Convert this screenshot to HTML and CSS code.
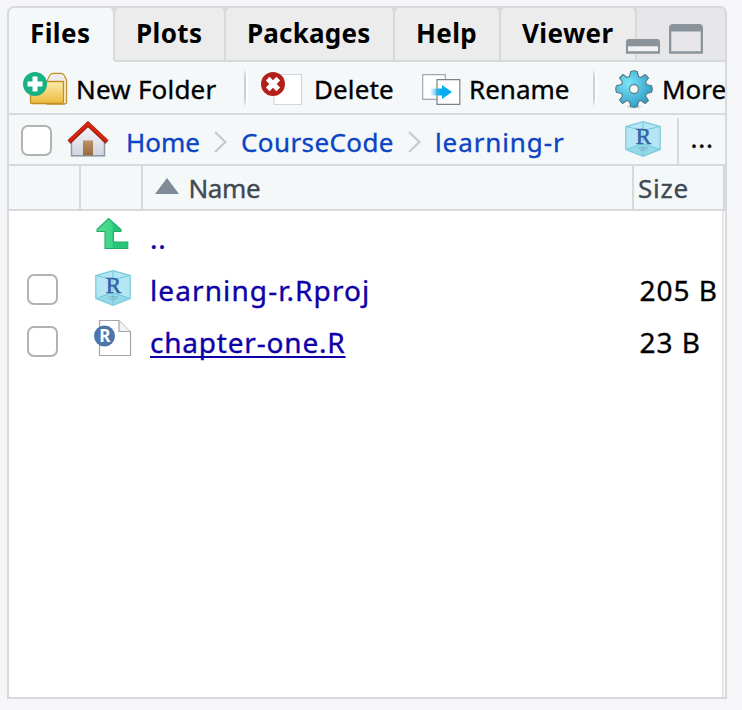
FILE: index.html
```html
<!DOCTYPE html>
<html lang="en">
<head>
<meta charset="utf-8">
<title>Files</title>
<link rel="stylesheet" href="styles.css">
</head>
<body>
<svg class="defs" width="0" height="0">
  <defs>
    <linearGradient id="gold" x1="0" y1="0" x2="0" y2="1"><stop offset="0" stop-color="#f9edaa"/><stop offset="1" stop-color="#edb93d"/></linearGradient>
    <radialGradient id="blue" cx=".35" cy=".35" r=".7"><stop offset="0" stop-color="#7be6f6"/><stop offset="1" stop-color="#2f9cc6"/></radialGradient>
    <linearGradient id="wall" x1="0" y1="0" x2="0" y2="1"><stop offset="0" stop-color="#f5f5f8"/><stop offset="1" stop-color="#d2d5df"/></linearGradient>
    <linearGradient id="door" x1="0" y1="0" x2="0" y2="1"><stop offset="0" stop-color="#bd9266"/><stop offset="1" stop-color="#956a40"/></linearGradient>
    <linearGradient id="fade"><stop offset="0" stop-color="#06aeef" stop-opacity="0"/><stop offset=".45" stop-color="#06aeef"/></linearGradient>
    <linearGradient id="leaf"><stop offset="0" stop-color="#50dc93"/><stop offset=".45" stop-color="#42d68b"/><stop offset=".55" stop-color="#27c477"/><stop offset="1" stop-color="#27c477"/></linearGradient>
    <symbol id="cube" viewBox="0 0 36 36">
      <path d="M18 .7 35.2 5.5V28.500L18 35.300.8 28.500V5.500Z" fill="#b4e6f5"/>
      <path d="M1 28.500 18 22.500 35 28.500 18 35Z" fill="#93d9ea"/>
      <path d="M1 5.500 18 9.500 35 5.500M1 28.500 18 22.500 35 28.500M18 1V35" fill="none" stroke="#6cc8d8" stroke-width="1"/>
      <path d="M18 .7 35.2 5.5V28.500L18 35.300.8 28.500V5.500Z" fill="none" stroke="#7fcbdc" stroke-width="1.300"/>
      <path d="M13 27.500q5-2 10-.5M15 29.500q4-1.500 7-.5" fill="none" stroke="#71aabc" stroke-width=".8"/>
      <text class="cube-letter" x="18.300" y="22.800" text-anchor="middle">R</text>
    </symbol>
  </defs>
</svg>
<main class="panel">
  <nav class="tabs">
    <div class="tab active">Files</div>
    <div class="tab plots">Plots</div>
    <div class="tab packages">Packages</div>
    <div class="tab">Help</div>
    <div class="tab viewer">Viewer</div>
    <div class="window-controls">
      <svg width="78" height="30" viewBox="0 0 78 30">
        <path d="M0 29.700V18q0-3 3-3H31q3 0 3 3V29.700Z" fill="#8a949a"/><path d="M2 22.300H32V27.300H2Z" fill="#f1f2f3"/>
        <path d="M43 29.700V4q0-4 4-4H73q4 0 4 4V29.700Z" fill="#8a949a"/><path d="M45.300 7.500H74.700V27.300H45.300Z" fill="#e7e7e9"/>
      </svg>
    </div>
  </nav>

  <div class="toolbar">
    <div class="tool new-folder">
      <svg width="46" height="36" viewBox="0 0 46 36">
        <path d="M23 12 27 4Q28 2.500 30 2.500H38Q40 2.500 41 4L43.500 9V31Q43.500 33 41 33H24Z" fill="#fbf3d4" stroke="#bd9234" stroke-width="1.300"/>
        <path d="M24 11 28 4.500Q28.500 3.500 30 3.500H38Q39.500 3.500 42 10V11Z" fill="#ececf0"/>
        <path d="M7.500 17 23 10.500H40.500V31Q40.500 32.500 38.500 32.500H9Q7.500 32.500 7.500 31Z" fill="url(#gold)" stroke="#c18d24" stroke-width="1.300"/>
        <circle cx="12" cy="13" r="12" fill="#17b183"/>
        <path d="M12 5.500V20.500M4.500 13H19.500" stroke="#fff" stroke-width="5"/>
      </svg><span>New Folder</span>
    </div>
    <i class="divider"></i>
    <div class="tool delete">
      <svg width="42" height="36" viewBox="0 0 42 36">
        <path d="M13 3.500H40.500V33.500H13Z" fill="#fff" stroke="#d2d6e0" stroke-width="1.200"/>
        <circle cx="12" cy="13" r="12" fill="#b51f1a"/>
        <path d="M6.700 7.700 17.300 18.300M17.300 7.700 6.700 18.300" stroke="#fff" stroke-width="5.200"/>
      </svg><span>Delete</span>
    </div>
    <div class="tool rename">
      <svg width="39" height="36" viewBox="0 0 39 36">
        <path d="M.700 3.700H23.300V28.300H.700Z" fill="#fff" stroke="#a0a7b2" stroke-width="1.200"/>
        <path d="M15 8.700H37.800V33.400H15Z" fill="#fff" stroke="#77818d" stroke-width="1.200"/>
        <path d="M8 17.500H20V14L30 21 20 28V24.500H8Z" fill="url(#fade)"/>
      </svg><span>Rename</span>
    </div>
    <i class="divider"></i>
    <div class="tool more">
      <svg width="38" height="40" viewBox="-19 -20 38 40">
        <ellipse cx="0" cy="17.500" rx="7" ry="1.800" fill="#cbd7dd"/>
        <path d="M-3.200-17.500Q0-19 3.200-17.500L4.500-12.500 7-11.500 11-14.500 14.500-11 11.500-7 12.500-4.500 17.500-3.200Q19 0 17.500 3.200L12.500 4.500 11.500 7 14.500 11.500 11 14.500 7 11.500 4.500 12.500 3.200 17.500Q0 19-3.200 17.500L-4.500 12.500-7 11.500-11.500 14.500-14.500 11-11.500 7-12.500 4.500-17.500 3.200Q-19 0-17.500-3.200L-12.500-4.500-11.500-7-14.500-11-11-14.500-7-11.500-4.500-12.500Z" fill="url(#blue)" stroke="#54778a" stroke-width="1.100" stroke-linejoin="round"/>
        <circle r="4.500" fill="#f4f8f9" stroke="#668796" stroke-width="1.300"/>
      </svg><span>More</span>
    </div>
  </div>

  <div class="path">
    <span class="check"></span>
    <svg class="home-icon" width="42" height="37" viewBox="0 0 42 37">
      <path d="M4.500 19 21 4.500 37.500 19V35.500H4.500Z" fill="url(#wall)"/>
      <path d="M4.500 20V34.800H37.500V20" fill="none" stroke="#8c9aa4" stroke-width="1.500"/>
      <path d="M16 19.500H26V34.500H16Z" fill="url(#door)"/>
      <path d="M2 21 21 3.200 40 21" fill="none" stroke="#8f170e" stroke-width="4.500"/>
      <path d="M2 20.500 21 2.700 40 20.500" fill="none" stroke="#dd230e" stroke-width="3"/>
    </svg>
    <a class="crumb home">Home</a>
    <svg class="chevron" width="13" height="22" viewBox="0 0 13 22"><path d="M1 1 11.500 11 1 21" fill="none" stroke="#c5cacf" stroke-width="2.200"/></svg>
    <a class="crumb course">CourseCode</a>
    <svg class="chevron" width="13" height="22" viewBox="0 0 13 22"><path d="M1 1 11.500 11 1 21" fill="none" stroke="#c5cacf" stroke-width="2.200"/></svg>
    <a class="crumb project">learning-r</a>
    <svg class="path-cube" width="36" height="36"><use href="#cube"/></svg>
    <span class="browse">...</span>
  </div>

  <div class="columns head">
    <span></span><span></span>
    <span class="name-head"><svg width="24" height="16" viewBox="0 0 24 16"><path d="M0 16 12 0 24 16Z" fill="#808a99"/></svg><b>Name</b></span>
    <span class="size-head">Size</span>
  </div>

  <div class="files">
    <div class="columns row">
      <span></span>
      <svg class="up" width="34" height="33" viewBox="0 0 34 33"><path d="M10 31.500V14.500H2V12.500L13.500 1.500 26 12.500V14.500H18.500V25H32.800V31.500Z" fill="url(#leaf)" stroke="#22ac67" stroke-width="1.100"/></svg>
      <a class="file">..</a>
    </div>
    <div class="columns row">
      <span class="check"></span>
      <svg class="file-cube" width="36" height="36"><use href="#cube"/></svg>
      <a class="file rproj">learning-r.Rproj</a><span class="size">205 B</span>
    </div>
    <div class="columns row">
      <span class="check"></span>
      <svg class="script" width="38" height="38" viewBox="0 0 38 38">
        <path d="M5.500 1.500H25L36.500 13V36.500H5.500Z" fill="#fff" stroke="#a2a5a9" stroke-width="1.200"/>
        <path d="M25 1.500V12.500H36.500" fill="#f2f2f3" stroke="#a2a5a9" stroke-width="1.200"/>
        <circle cx="10.500" cy="17" r="10.500" fill="#4d75aa"/>
        <text class="script-letter" x="10.800" y="22.800" text-anchor="middle">R</text>
      </svg>
      <a class="file hovered">chapter-one.R</a><span class="size">23 B</span>
    </div>
  </div>
</main>
</body>
</html>
```
FILE: styles.css
```css
* { box-sizing: border-box; }
html, body { height: 100%; overflow: hidden; }
body {
  margin: 0;
  padding: 6px 15px 11px 7px;
  background: #f6f6f9;
  color: #000;
  font: 26px "Noto Sans", "Open Sans", sans-serif;
  -webkit-text-stroke: .35px currentColor;
  white-space: nowrap;
}
.defs { display: block; position: absolute; }
svg { display: block; flex: none; -webkit-text-stroke: 0; }

.panel {
  height: 693px;
  display: flex;
  flex-direction: column;
  border: 2px solid #d6dadc;
  border-radius: 7px 7px 0 0;
  background: #fff;
  overflow: hidden;
}

.tabs {
  height: 54px;
  flex: none;
  display: grid;
  grid-template-columns: 106px 111px 169px 106px 136px 1fr;
  background: #d6dadc;
  -webkit-text-stroke: 0;
}
.tab {
  padding-left: 21px;
  border-right: 2px solid #d6dadc;
  border-bottom: 2px solid #d6dadc;
  background: #ececec;
  background-clip: padding-box;
  border-radius: 5px 5px 0 0;
  font-weight: 700;
  letter-spacing: .4px;
  line-height: 51px;
}
.tab.active { background: #f4f8f9; background-clip: padding-box; border-bottom-color: #f4f8f9; }
.packages { letter-spacing: .2px; }
.window-controls {
  background: #e7e7e9;
  border-bottom: 2px solid #d6dadc;
  padding-top: 16px;
}
.window-controls svg { position: relative; left: -11px; }

.toolbar {
  height: 53px;
  flex: none;
  display: flex;
  align-items: center;
  border-bottom: 2px solid #d6dadc;
  background: #f4f8f9;
  overflow: hidden;
}
.tool { display: flex; align-items: center; flex: none; padding-top: 2px; line-height: 51px; }
.tool span { padding-top: 1px; }
.new-folder { width: 235px; padding-left: 14px; gap: 7px; letter-spacing: .2px; }
.delete { width: 165px; padding-left: 4px; letter-spacing: .1px; }
.delete svg { margin-left: 9px; }
.delete span { margin-left: 11px; }
.rename { width: 180px; padding-left: 9px; gap: 8px; }
.more { padding-left: 18px; gap: 9px; }
.divider { width: 4px; height: 38px; flex: none; background: linear-gradient(90deg, #cdd0d4 0 50%, #fff 50%); mask-image: linear-gradient(transparent, #000 20% 80%, transparent); }

.path {
  height: 51px;
  flex: none;
  display: flex;
  align-items: center;
  border-bottom: 2px solid #d6dadc;
  background: #f4f8f9;
}
.check { width: 31px; height: 31px; flex: none; border: 2px solid #b2b2b2; border-radius: 7px; background: #fff; }
.path .check { margin: 2px 15px 0 12px; }
.home-icon { margin-right: 17px; }
.crumb { color: #0b44c4; padding-top: 5px; line-height: 46px; flex: none; }
.home { width: 88px; }
.course { width: 156px; letter-spacing: .4px; }
.project { width: 189.5px; letter-spacing: .9px; }
.chevron { margin: 4px 14px 0 0; }
.course + .chevron { margin-left: 11px; }
.path-cube { margin: -2px 16px 0 0; }
.browse { flex: 1; height: 46px; margin-top: 3px; border-left: 2px solid #d6dadc; padding-left: 12px; line-height: 40px; letter-spacing: .8px; }

.columns { display: grid; grid-template-columns: 72px 62px 491px 1fr; align-items: center; }
.head { height: 45px; flex: none; border-bottom: 2px solid #d6dadc; background: #f4f8f9; color: #404850; }
.head span { height: 43px; line-height: 45px; border-right: 2px solid #d6dadc; }
.name-head { display: flex; align-items: center; gap: 9.5px; padding-left: 12px; letter-spacing: -.4px; }
.name-head b { font-weight: 400; padding-top: 1px; }
.name-head svg { margin-top: -4px; }
.size-head { padding-left: 4px; letter-spacing: .8px; }

.files { flex: 1; margin-right: 1px; padding-top: 2px; border-right: 2px solid #e4e5e7; font-size: 28px; }
.row { height: 52px; line-height: 52px; }
.row .check { margin: -4px 0 0 18px; }
.row > svg { margin: -6px 0 0 14px; }
.row > svg.up { margin-top: -11px; }
.row > svg.script { margin-left: 13px; margin-top: -10px; }
.file { color: #0d00a8; margin: -2px 0 0 7px; width: max-content; letter-spacing: .8px; line-height: 52px; }
.rproj { letter-spacing: 1.1px; }
.hovered { text-decoration: underline; text-decoration-thickness: 2px; text-underline-offset: 3px; text-decoration-skip-ink: none; }
.size { margin-top: -2px; padding-left: 5.5px; letter-spacing: 1px; }
.cube-letter { font: 400 23px "Liberation Serif", serif; fill: #3563a6; stroke: #3563a6; stroke-width: .6px; }
.script-letter { font: 700 17px "Noto Sans", sans-serif; fill: #fff; }
```
